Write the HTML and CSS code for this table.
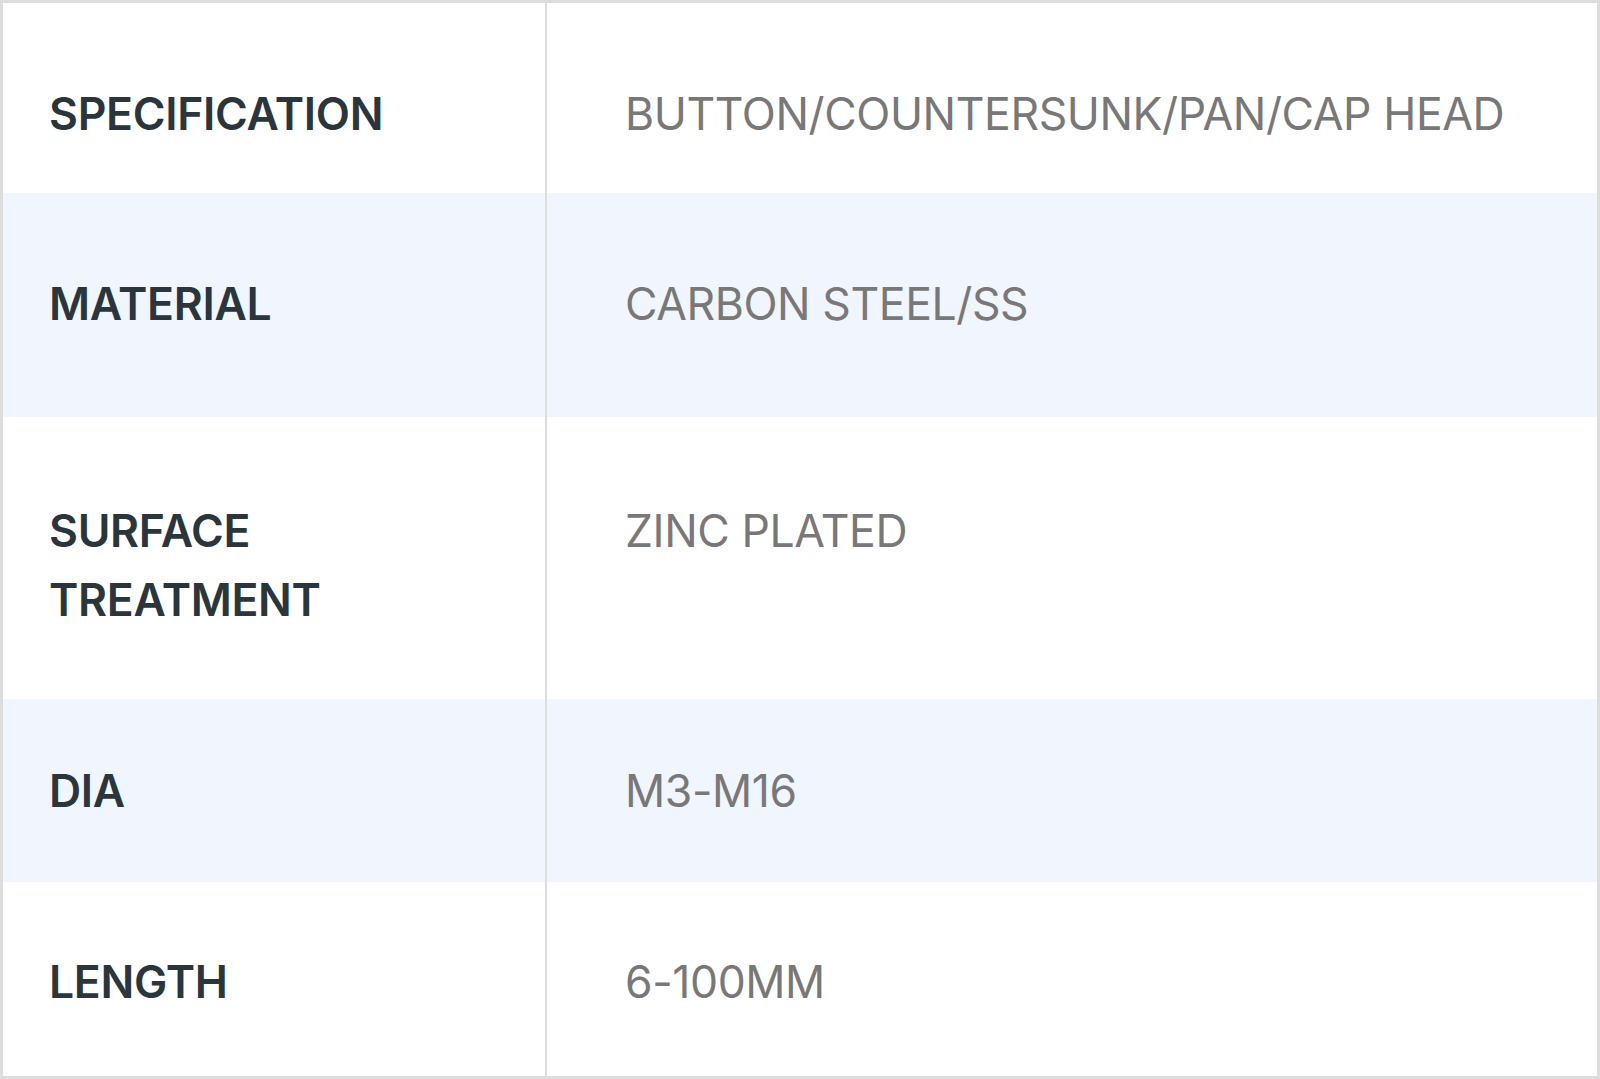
FILE: index.html
```html
<!DOCTYPE html>
<html lang="en">
<head>
<meta charset="utf-8">
<title>Specifications</title>
<link rel="stylesheet" href="styles.css">
</head>
<body>
<div class="spec-table">
  <div class="spec-row row-spec">
    <div class="cell label">SPECIFICATION</div>
    <div class="cell value">BUTTON/COUNTERSUNK/PAN/CAP HEAD</div>
  </div>
  <div class="spec-row row-material striped">
    <div class="cell label">MATERIAL</div>
    <div class="cell value">CARBON STEEL/SS</div>
  </div>
  <div class="spec-row row-surface">
    <div class="cell label">SURFACE<br>TREATMENT</div>
    <div class="cell value">ZINC PLATED</div>
  </div>
  <div class="spec-row row-dia striped">
    <div class="cell label">DIA</div>
    <div class="cell value">M3-M16</div>
  </div>
  <div class="spec-row row-length">
    <div class="cell label">LENGTH</div>
    <div class="cell value">6-100MM</div>
  </div>
</div>
</body>
</html>
```
FILE: styles.css
```css
html, body {
  margin: 0;
  padding: 0;
  background: #ffffff;
}

.spec-table {
  width: 1600px;
  height: 1079px;
  box-sizing: border-box;
  border: 3px solid #dddddd;
  display: flex;
  flex-direction: column;
  font-family: "Inter", "Liberation Sans", sans-serif;
  font-size: 44.5px;
  line-height: 69px;
}

.spec-row {
  display: grid;
  grid-template-columns: 542px 1fr;
  background: #ffffff;
}

.spec-row.striped {
  background: #f1f5fd;
}

.cell {
  box-sizing: border-box;
}

.label {
  padding-left: 46px;
  font-weight: 600;
  color: #2a363c;
  letter-spacing: -0.3px;
}

.value {
  padding-left: 78px;
  border-left: 2px solid #dddddd;
  font-weight: 400;
  color: #787878;
  letter-spacing: -0.4px;
}

.row-spec { height: 190px; }
.row-spec .cell { padding-top: 77px; }

.row-material { height: 224px; }
.row-material .cell { padding-top: 77px; }

.row-surface { height: 282px; }
.row-surface .cell { padding-top: 80px; }

.row-dia { height: 183px; }
.row-dia .cell { padding-top: 58px; }

.row-length { height: 194px; }
.row-length .cell { padding-top: 66px; }
```
